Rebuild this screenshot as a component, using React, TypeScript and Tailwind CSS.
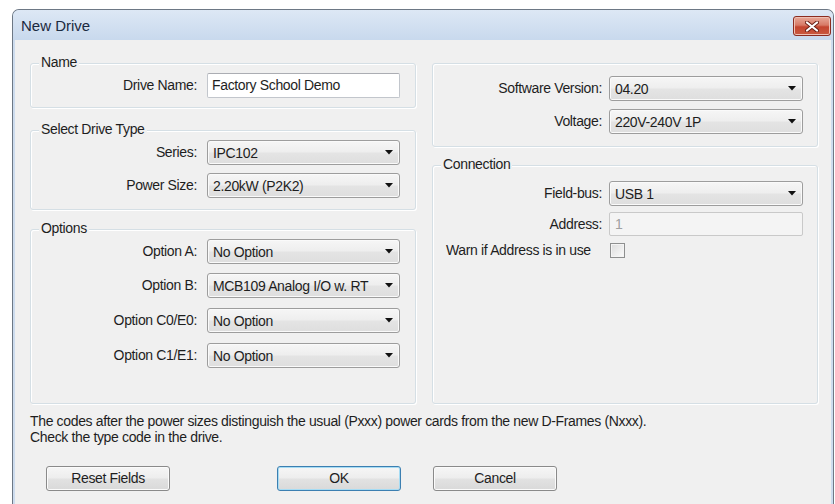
import React from "react";

function GroupBox({
  title,
  className = "",
  children,
}: {
  title?: string;
  className?: string;
  children?: React.ReactNode;
}) {
  return (
    <div
      className={`relative rounded-[3px] border border-[#d5dfe5] shadow-[inset_1px_1px_0_#fff,1px_1px_0_#fff] ${className}`}
    >
      {title && (
        <span className="absolute left-[8px] top-[-10px] bg-[#f0f0f0] px-[2px] leading-[16px]">
          {title}
        </span>
      )}
      {children}
    </div>
  );
}

function Arrow() {
  return (
    <svg width="8" height="5" viewBox="0 0 8 5" className="shrink-0">
      <polygon points="0,0 8,0 4,4.5" fill="#111" />
    </svg>
  );
}

function Combo({ value, width = 193 }: { value: string; width?: number }) {
  return (
    <div
      className={`flex h-[25px] items-center justify-between rounded-[3px] border border-[#9d9d9d] bg-[linear-gradient(#f6f6f6,#eeeeee_48%,#e4e4e4_52%,#dedede)] pl-[5px] pr-[6px] shadow-[inset_0_0_0_1px_#fafafa] ${
        width === 194 ? "w-[194px]" : "w-[193px]"
      }`}
    >
      <span className="whitespace-nowrap leading-none">{value}</span>
      <Arrow />
    </div>
  );
}

function Field({
  label,
  children,
  gap = "mr-[10px]",
  pr = "pr-[15px]",
  className = "",
}: {
  label: string;
  children: React.ReactNode;
  gap?: string;
  pr?: string;
  className?: string;
}) {
  return (
    <div className={`flex items-center justify-end ${pr} ${className}`}>
      <span className={`whitespace-nowrap ${gap}`}>{label}</span>
      {children}
    </div>
  );
}

function Button({
  label,
  focused = false,
  className = "",
}: {
  label: string;
  focused?: boolean;
  className?: string;
}) {
  return (
    <div
      className={`flex h-[25px] w-[124px] items-center justify-center rounded-[3px] border bg-[linear-gradient(#f6f6f6,#ededed_48%,#e2e2e2_52%,#d9d9d9)] ${
        focused
          ? "border-[#3c7fb1] shadow-[inset_0_0_0_1px_#a6dcf4]"
          : "border-[#8a8a8a] shadow-[inset_0_0_0_1px_#fbfbfb]"
      } ${className}`}
    >
      {label}
    </div>
  );
}

function CloseButton() {
  return (
    <div className="mr-[2px] mt-[6px] flex h-[20px] w-[38px] items-center justify-center self-start rounded-[3px] border border-[#8b2c20] bg-[linear-gradient(#e8a999,#d77a66_45%,#c4452f_55%,#c95a40)] shadow-[inset_0_0_0_1px_#eec0b4]">
      <svg width="14" height="11" viewBox="0 0 14 11">
        <path d="M2 1.5 L12 9.5 M12 1.5 L2 9.5" stroke="#6a1f15" strokeWidth="4" strokeLinecap="round" />
        <path d="M2 1.5 L12 9.5 M12 1.5 L2 9.5" stroke="#ffffff" strokeWidth="2.2" strokeLinecap="round" />
      </svg>
    </div>
  );
}

export default function App() {
  return (
    <div className="h-[504px] w-[835px] overflow-hidden bg-white pl-[12px] pt-[9px] font-['Liberation_Sans',Arial,sans-serif] text-[14px] tracking-[-0.35px] text-[#1e1e1e]">
      <div className="w-[822px] rounded-t-[7px] border border-b-0 border-[#6d7885] bg-[#cddcee]">
        {/* title bar */}
        <div className="flex h-[30px] items-center justify-between rounded-t-[6px] bg-[linear-gradient(#dde8f5,#c8d9ed)] pl-[8px]">
          <span className="pt-[2px] text-[15px] tracking-normal text-[#1b2a40]">New Drive</span>
          <CloseButton />
        </div>

        {/* client area */}
        <div className="mx-[2px] h-[480px] bg-[#f0f0f0] pl-[15px] pt-[23px]">
          <div className="flex gap-[16px]">
            {/* left column */}
            <div className="flex w-[386px] flex-col">
              <GroupBox title="Name" className="h-[45px] pt-[9px]">
                <Field label="Drive Name:">
                  <div className="flex h-[25px] w-[193px] items-center rounded-[2px] border border-[#c2c6cc] border-t-[#abadb3] bg-white pl-[4px]">
                    Factory School Demo
                  </div>
                </Field>
              </GroupBox>

              <GroupBox title="Select Drive Type" className="mt-[22px] h-[80px] pt-[9px]">
                <Field label="Series:">
                  <Combo value="IPC102" />
                </Field>
                <Field label="Power Size:" className="mt-[8px]">
                  <Combo value="2.20kW (P2K2)" />
                </Field>
              </GroupBox>

              <GroupBox title="Options" className="mt-[19px] h-[175px] pt-[9px]">
                <Field label="Option A:">
                  <Combo value="No Option" />
                </Field>
                <Field label="Option B:" className="mt-[9px]">
                  <Combo value="MCB109 Analog I/O w. RT" />
                </Field>
                <Field label="Option C0/E0:" className="mt-[10px]">
                  <Combo value="No Option" />
                </Field>
                <Field label="Option C1/E1:" className="mt-[10px]">
                  <Combo value="No Option" />
                </Field>
              </GroupBox>
            </div>

            {/* right column */}
            <div className="flex w-[386px] flex-col">
              <GroupBox className="h-[84px] pt-[12px]">
                <Field label="Software Version:" gap="mr-[7px]" pr="pr-[14px]">
                  <Combo value="04.20" width={194} />
                </Field>
                <Field label="Voltage:" gap="mr-[7px]" pr="pr-[14px]" className="mt-[8px]">
                  <Combo value="220V-240V 1P" width={194} />
                </Field>
              </GroupBox>

              <GroupBox title="Connection" className="mt-[18px] h-[239px] pt-[15px]">
                <Field label="Field-bus:" gap="mr-[7px]" pr="pr-[14px]">
                  <Combo value="USB 1" width={194} />
                </Field>
                <Field label="Address:" gap="mr-[7px]" pr="pr-[14px]" className="mt-[6px]">
                  <div className="flex h-[24px] w-[194px] items-center rounded-[2px] border border-[#c9c9c9] bg-[#f4f4f4] pl-[5px] text-[#a0a0a0]">
                    1
                  </div>
                </Field>
                <div className="mt-[7px] flex h-[15px] items-center pl-[13px] pr-[14px]">
                  <span className="flex-1 whitespace-nowrap leading-[15px]">Warn if Address is in use</span>
                  <div className="w-[194px]">
                    <div className="ml-[1px] h-[15px] w-[15px] border border-[#8e8f8f] bg-[linear-gradient(135deg,#dcdcdc,#fbfbfb)] shadow-[inset_0_0_0_1px_#f4f4f4]" />
                  </div>
                </div>
              </GroupBox>
            </div>
          </div>

          {/* note */}
          <div className="mt-[9px] leading-[16px]">
            <div>
              The codes after the power sizes distinguish the usual (Pxxx) power cards from the new D-Frames (Nxxx).
            </div>
            <div>Check the type code in the drive.</div>
          </div>

          {/* buttons */}
          <div className="mt-[21px] flex pl-[16px]">
            <Button label="Reset Fields" />
            <Button label="OK" focused className="ml-[107px]" />
            <Button label="Cancel" className="ml-[32px]" />
          </div>
        </div>
      </div>
    </div>
  );
}
